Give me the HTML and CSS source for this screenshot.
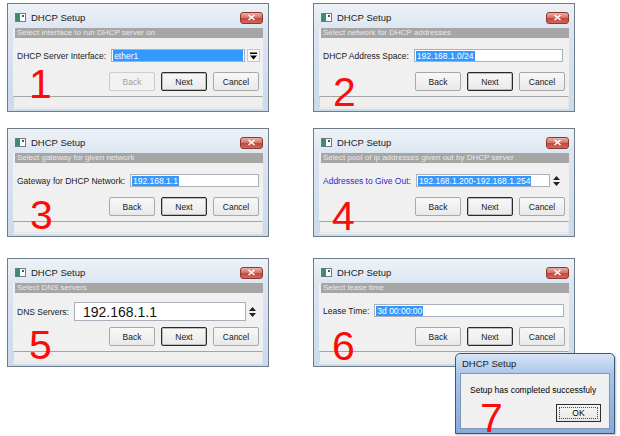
FILE: index.html
```html
<!DOCTYPE html>
<html>
<head>
<meta charset="utf-8">
<link rel="stylesheet" href="styles.css">
</head>
<body>
<div class="page">

  <div class="win">
    <div class="titlebar">
      <svg class="appicon" width="11" height="9" viewBox="0 0 11 9"><rect x="0.5" y="0.5" width="10" height="8" fill="#fff" stroke="#6b7a8a"/><rect x="1" y="1" width="4" height="7" fill="#3a8f6a"/><rect x="7" y="2" width="2" height="2" fill="#555"/></svg>
      <span class="title">DHCP Setup</span>
      <span class="close"><svg width="9" height="7" viewBox="0 0 9 7"><path d="M1.5 1 L7.5 6 M7.5 1 L1.5 6" stroke="#fff" stroke-width="1.6"/></svg></span>
    </div>
    <div class="client">
      <div class="hint">Select interface to run DHCP server on</div>
      <div class="field f1">
        <span class="label">DHCP Server Interface:</span>
        <span class="input combo"><span class="sel fill">ether1</span></span>
        <span class="dd"><svg width="7" height="8" viewBox="0 0 7 8"><rect x="0" y="0.5" width="7" height="1.5" fill="#000"/><path d="M0 3.5 H7 L3.5 7.5 Z" fill="#000"/></svg></span>
      </div>
      <div class="buttons">
        <span class="btn disabled">Back</span>
        <span class="btn default">Next</span>
        <span class="btn">Cancel</span>
      </div>
      <div class="status"></div>
    </div>
    <span class="num n1">1</span>
  </div>

  <div class="win">
    <div class="titlebar">
      <svg class="appicon" width="11" height="9" viewBox="0 0 11 9"><rect x="0.5" y="0.5" width="10" height="8" fill="#fff" stroke="#6b7a8a"/><rect x="1" y="1" width="4" height="7" fill="#3a8f6a"/><rect x="7" y="2" width="2" height="2" fill="#555"/></svg>
      <span class="title">DHCP Setup</span>
      <span class="close"><svg width="9" height="7" viewBox="0 0 9 7"><path d="M1.5 1 L7.5 6 M7.5 1 L1.5 6" stroke="#fff" stroke-width="1.6"/></svg></span>
    </div>
    <div class="client">
      <div class="hint">Select network for DHCP addresses</div>
      <div class="field f2">
        <span class="label">DHCP Address Space:</span>
        <span class="input"><span class="sel">192.168.1.0/24</span></span>
      </div>
      <div class="buttons">
        <span class="btn">Back</span>
        <span class="btn default">Next</span>
        <span class="btn">Cancel</span>
      </div>
      <div class="status"></div>
    </div>
    <span class="num n2">2</span>
  </div>

  <div class="win">
    <div class="titlebar">
      <svg class="appicon" width="11" height="9" viewBox="0 0 11 9"><rect x="0.5" y="0.5" width="10" height="8" fill="#fff" stroke="#6b7a8a"/><rect x="1" y="1" width="4" height="7" fill="#3a8f6a"/><rect x="7" y="2" width="2" height="2" fill="#555"/></svg>
      <span class="title">DHCP Setup</span>
      <span class="close"><svg width="9" height="7" viewBox="0 0 9 7"><path d="M1.5 1 L7.5 6 M7.5 1 L1.5 6" stroke="#fff" stroke-width="1.6"/></svg></span>
    </div>
    <div class="client">
      <div class="hint">Select gateway for given network</div>
      <div class="field f3">
        <span class="label">Gateway for DHCP Network:</span>
        <span class="input"><span class="sel">192.168.1.1</span></span>
      </div>
      <div class="buttons">
        <span class="btn">Back</span>
        <span class="btn default">Next</span>
        <span class="btn">Cancel</span>
      </div>
      <div class="status"></div>
    </div>
    <span class="num n3">3</span>
  </div>

  <div class="win">
    <div class="titlebar">
      <svg class="appicon" width="11" height="9" viewBox="0 0 11 9"><rect x="0.5" y="0.5" width="10" height="8" fill="#fff" stroke="#6b7a8a"/><rect x="1" y="1" width="4" height="7" fill="#3a8f6a"/><rect x="7" y="2" width="2" height="2" fill="#555"/></svg>
      <span class="title">DHCP Setup</span>
      <span class="close"><svg width="9" height="7" viewBox="0 0 9 7"><path d="M1.5 1 L7.5 6 M7.5 1 L1.5 6" stroke="#fff" stroke-width="1.6"/></svg></span>
    </div>
    <div class="client">
      <div class="hint">Select pool of ip addresses given out by DHCP server</div>
      <div class="field f4">
        <span class="label blue">Addresses to Give Out:</span>
        <span class="input"><span class="sel">192.168.1.200-192.168.1.254</span></span>
        <span class="spin"><svg width="7" height="12" viewBox="0 0 7 12"><path d="M0 5 L3.5 1 L7 5 Z M0 7 L7 7 L3.5 11 Z" fill="#222"/></svg></span>
      </div>
      <div class="buttons">
        <span class="btn">Back</span>
        <span class="btn default">Next</span>
        <span class="btn">Cancel</span>
      </div>
      <div class="status"></div>
    </div>
    <span class="num n4">4</span>
  </div>

  <div class="win r3">
    <div class="titlebar">
      <svg class="appicon" width="11" height="9" viewBox="0 0 11 9"><rect x="0.5" y="0.5" width="10" height="8" fill="#fff" stroke="#6b7a8a"/><rect x="1" y="1" width="4" height="7" fill="#3a8f6a"/><rect x="7" y="2" width="2" height="2" fill="#555"/></svg>
      <span class="title">DHCP Setup</span>
      <span class="close"><svg width="9" height="7" viewBox="0 0 9 7"><path d="M1.5 1 L7.5 6 M7.5 1 L1.5 6" stroke="#fff" stroke-width="1.6"/></svg></span>
    </div>
    <div class="client">
      <div class="hint">Select DNS servers</div>
      <div class="field big f5">
        <span class="label">DNS Servers:</span>
        <span class="input large">192.168.1.1</span>
        <span class="spin"><svg width="7" height="12" viewBox="0 0 7 12"><path d="M0 5 L3.5 1 L7 5 Z M0 7 L7 7 L3.5 11 Z" fill="#222"/></svg></span>
      </div>
      <div class="buttons">
        <span class="btn">Back</span>
        <span class="btn default">Next</span>
        <span class="btn">Cancel</span>
      </div>
      <div class="status"></div>
    </div>
    <span class="num n5">5</span>
  </div>

  <div class="win r3">
    <div class="titlebar">
      <svg class="appicon" width="11" height="9" viewBox="0 0 11 9"><rect x="0.5" y="0.5" width="10" height="8" fill="#fff" stroke="#6b7a8a"/><rect x="1" y="1" width="4" height="7" fill="#3a8f6a"/><rect x="7" y="2" width="2" height="2" fill="#555"/></svg>
      <span class="title">DHCP Setup</span>
      <span class="close"><svg width="9" height="7" viewBox="0 0 9 7"><path d="M1.5 1 L7.5 6 M7.5 1 L1.5 6" stroke="#fff" stroke-width="1.6"/></svg></span>
    </div>
    <div class="client">
      <div class="hint">Select lease time</div>
      <div class="field f6">
        <span class="label">Lease Time:</span>
        <span class="input"><span class="sel">3d 00:00:00</span></span>
      </div>
      <div class="buttons">
        <span class="btn">Back</span>
        <span class="btn default">Next</span>
        <span class="btn">Cancel</span>
      </div>
      <div class="status"></div>
    </div>
    <span class="num n6">6</span>
  </div>

  <div class="msg">
    <div class="msg-title">DHCP Setup</div>
    <div class="msg-body">
      <div class="msg-text">Setup has completed successfuly</div>
      <div class="msg-buttons"><span class="okbtn"><span class="focus">OK</span></span></div>
    </div>
    <span class="num n7">7</span>
  </div>

</div>
</body>
</html>
```

FILE: styles.css
```css
html, body {
  margin: 0;
  padding: 0;
  background: #ffffff;
  overflow: hidden;
}
body {
  width: 620px;
  height: 436px;
  font-family: "Liberation Sans", Arial, sans-serif;
  color: #000;
}
.page {
  position: relative;
  width: 620px;
  height: 436px;
  box-sizing: border-box;
  padding: 3px 0 0 7px;
  display: grid;
  grid-template-columns: 262px 262px;
  grid-template-rows: 109px 109px 109px;
  column-gap: 44px;
  row-gap: 16px;
  align-content: start;
}
.win {
  position: relative;
  box-sizing: border-box;
  height: 109px;
  border: 1px solid #6f7c8a;
  background: linear-gradient(180deg, #eef2f7 0px, #dce6f1 24px, #cbdaea 100%);
  display: flex;
  flex-direction: column;
}
.win.r3 { margin-top: 5px; }

.titlebar {
  height: 24px;
  box-sizing: border-box;
  padding: 3px 5px 0 7px;
  display: flex;
  align-items: center;
}
.appicon { flex: none; }
.title {
  margin-left: 5px;
  font-size: 9.5px;
  color: #1b1b1b;
  flex: 1;
}
.close {
  width: 23px;
  height: 12px;
  box-sizing: border-box;
  border: 1px solid #8c3a30;
  border-radius: 3px;
  background: linear-gradient(180deg, #eab0a6 0%, #d6766a 45%, #c5473a 55%, #d2685c 100%);
  display: flex;
  align-items: center;
  justify-content: center;
}

.client {
  flex: 1;
  margin: 0 5px 2px;
  background: #f0f0f0;
  display: flex;
  flex-direction: column;
  padding-bottom: 1px;
}
.hint {
  height: 10px;
  margin-left: 2px;
  background: #a6a6a6;
  color: #e9e9e9;
  font-size: 8px;
  line-height: 10px;
  padding-left: 2px;
  white-space: nowrap;
  overflow: hidden;
}
.field {
  margin-top: 11px;
  height: 13px;
  display: flex;
  align-items: center;
  padding: 0 5px 0 4px;
  font-size: 8.5px;
}
.field.big {
  margin-top: 9px;
  height: 19px;
  margin-bottom: -4px;
}
.label {
  white-space: nowrap;
  color: #1a1a1a;
}
.label.blue { color: #2a2ad8; }
.input {
  flex: 1;
  margin-left: 5px;
  height: 13px;
  box-sizing: border-box;
  border: 1px solid #a9b0ba;
  background: #fff;
  display: flex;
  align-items: center;
  padding: 0 1px;
  white-space: nowrap;
  overflow: hidden;
}
.input.large {
  height: 19px;
  font-size: 14px;
  padding-left: 8px;
  color: #111;
}
.sel {
  background: #3399ff;
  color: #fff;
  padding: 0 1px;
  line-height: 10px;
}
.sel.fill {
  flex: 1;
  align-self: stretch;
  display: flex;
  align-items: center;
  line-height: normal;
}
.f1 { padding-right: 3px; }
.f2 { padding-right: 6px; }
.f3 { padding-right: 4px; }
.f4 { padding-right: 9px; }
.f5 { padding-right: 7px; }
.f6 { padding-right: 5px; }
.dd {
  margin-left: 2px;
  width: 13px;
  height: 13px;
  box-sizing: border-box;
  border: 1px solid #c6c9ce;
  background: #f7f7f7;
  display: flex;
  align-items: center;
  justify-content: center;
}
.spin {
  margin-left: 3px;
  width: 7px;
  display: flex;
  align-items: center;
}
.buttons {
  margin-top: 10px;
  height: 19px;
  display: flex;
  justify-content: flex-end;
  gap: 6px;
  padding-right: 4px;
}
.btn {
  width: 46px;
  height: 19px;
  box-sizing: border-box;
  border: 1px solid #a8a8a8;
  border-radius: 2px;
  background: linear-gradient(180deg, #f8f8f8, #e9e9e9);
  font-size: 8.5px;
  color: #1a1a1a;
  display: flex;
  align-items: center;
  justify-content: center;
}
.btn.default {
  border: 1px solid #2a2a2a;
  box-shadow: inset 0 0 0 1px #bcbcbc;
}
.btn.disabled {
  border-color: #cdcdcd;
  color: #a3a3a3;
  background: #f2f2f2;
}
.status {
  margin-top: 5px;
  height: 12px;
  box-sizing: border-box;
  border-top: 1px solid #a4a4a4;
  border-left: 1px solid #d6d6d6;
  border-right: 1px solid #e6e6e6;
  border-bottom: 1px solid #e6e6e6;
  background: #efefef;
}

.num {
  position: absolute;
  font-family: "Liberation Sans", Arial, sans-serif;
  font-size: 41px;
  line-height: 41px;
  color: #ff0a0a;
  left: 19px;
  top: 66px;
}
.n1 { top: 60px; left: 21px; }
.n2 { top: 68px; }
.n3 { left: 22px; }
.n4 { top: 67px; left: 18px; }
.n5 { left: 21px; }
.n6 { top: 67px; left: 18px; }

.msg {
  position: absolute;
  left: 455px;
  top: 353px;
  width: 160px;
  height: 81px;
  box-sizing: border-box;
  border: 1px solid #3a5879;
  border-radius: 5px 5px 0 0;
  background: linear-gradient(180deg, #d7e5f6 0px, #a9c5e8 20px, #86aadb 100%);
  display: flex;
  flex-direction: column;
  box-shadow: 1px 1px 2px rgba(0,0,0,0.25);
}
.msg-title {
  height: 19px;
  padding-left: 6px;
  font-size: 9.5px;
  line-height: 19px;
  color: #1c1c1c;
}
.msg-body {
  flex: 1;
  margin: 0 4px 4px;
  background: #f0f0f0;
  border: 1px solid #7f97b6;
  display: flex;
  flex-direction: column;
}
.msg-text {
  font-size: 8.5px;
  padding: 11px 0 0 9px;
  height: 19px;
  box-sizing: border-box;
  white-space: nowrap;
}
.msg-buttons {
  margin-top: 11px;
  display: flex;
  justify-content: flex-end;
  padding-right: 8px;
}
.okbtn {
  width: 45px;
  height: 18px;
  box-sizing: border-box;
  border: 1px solid #2c2c2c;
  background: linear-gradient(180deg, #f6f6f6, #e6e6e6);
  padding: 2px;
  display: flex;
}
.focus {
  flex: 1;
  border: 1px dotted #4a4a4a;
  font-size: 8.5px;
  display: flex;
  align-items: center;
  justify-content: center;
}
.n7 {
  left: 24px;
  top: 47px;
  line-height: 34px;
}
```
